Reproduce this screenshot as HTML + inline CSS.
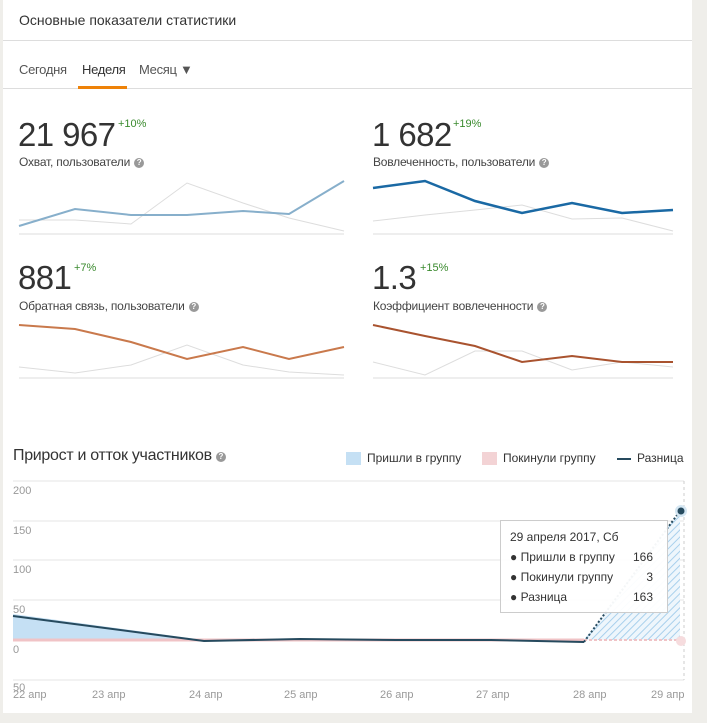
<!DOCTYPE html>
<html><head><meta charset="utf-8"><style>
body{margin:0;width:707px;height:723px;background:#efeeea;font-family:"Liberation Sans",sans-serif;position:relative;overflow:hidden;color:#333}
.card{position:absolute;left:3px;top:0;width:689px;height:713px;background:#fff}
.a{position:absolute;white-space:nowrap}
.q{display:inline-block;width:10px;height:10px;border-radius:50%;background:#999;color:#fff;font-size:8px;line-height:10px;text-align:center;font-weight:bold;vertical-align:1px;margin-left:4px}
.big{font-size:33px;color:#333;letter-spacing:-0.6px}
.pct{font-size:11px;color:#3a8a2e}
.lbl{font-size:12px;color:#444;letter-spacing:-0.2px}
</style></head><body>
<div class="card"></div>
<div class="a" style="left:19px;top:12px;font-size:14px;color:#333">Основные показатели статистики</div>
<div class="a" style="left:3px;top:40px;width:689px;height:1px;background:#ddd"></div>
<div class="a" style="left:19px;top:62px;font-size:13px;color:#555;letter-spacing:-0.3px">Сегодня</div>
<div class="a" style="left:82px;top:62px;font-size:13px;color:#333;letter-spacing:-0.3px">Неделя</div>
<div class="a" style="left:139px;top:62px;font-size:13px;color:#555;letter-spacing:-0.3px">Месяц ▼</div>
<div class="a" style="left:3px;top:88px;width:689px;height:1px;background:#ddd"></div>
<div class="a" style="left:78px;top:86px;width:49px;height:3px;background:#ee8208"></div>

<div class="a big" style="left:18px;top:116px">21 967</div><div class="a pct" style="left:118px;top:118px">+10%</div>
<div class="a lbl" style="left:19px;top:155px">Охват, пользователи<span class="q">?</span></div>
<div class="a big" style="left:372px;top:116px">1 682</div><div class="a pct" style="left:453px;top:118px">+19%</div>
<div class="a lbl" style="left:373px;top:155px">Вовлеченность, пользователи<span class="q">?</span></div>
<div class="a big" style="left:18px;top:259px">881</div><div class="a pct" style="left:74px;top:262px">+7%</div>
<div class="a lbl" style="left:19px;top:299px">Обратная связь, пользователи<span class="q">?</span></div>
<div class="a big" style="left:372px;top:259px">1.3</div><div class="a pct" style="left:420px;top:262px">+15%</div>
<div class="a lbl" style="left:373px;top:299px">Коэффициент вовлеченности<span class="q">?</span></div>

<div class="a" style="left:13px;top:447px;font-size:16px;color:#333;letter-spacing:-0.3px">Прирост и отток участников<span class="q">?</span></div>
<div class="a" style="left:346px;top:452px;width:15px;height:13px;background:#c5e0f4"></div>
<div class="a" style="left:367px;top:451px;font-size:12px">Пришли в группу</div>
<div class="a" style="left:482px;top:452px;width:15px;height:13px;background:#f3d3d5"></div>
<div class="a" style="left:503px;top:451px;font-size:12px">Покинули группу</div>
<div class="a" style="left:617px;top:458px;width:14px;height:2px;background:#264a5e"></div>
<div class="a" style="left:637px;top:451px;font-size:12px">Разница</div>

<svg class="a" style="left:0;top:0" width="707" height="723">
<defs><pattern id="h" width="5" height="5" patternUnits="userSpaceOnUse" patternTransform="rotate(45)"><rect width="5" height="5" fill="#eef6fc"/><line x1="0" y1="0" x2="0" y2="5" stroke="#a9d0ec" stroke-width="2"/></pattern></defs>
<g fill="none" stroke-width="1">
<line x1="19" y1="234" x2="344" y2="234" stroke="#ddd"/>
<line x1="373" y1="234" x2="673" y2="234" stroke="#ddd"/>
<line x1="19" y1="378" x2="344" y2="378" stroke="#ddd"/>
<line x1="373" y1="378" x2="673" y2="378" stroke="#ddd"/>
<polyline points="19,220 75,220 131,224 187,183 243,203 289,218 344,231" stroke="#ddd"/>
<polyline points="373,221 425,215 475,210 522,205 572,219 622,218 673,231" stroke="#ddd"/>
<polyline points="19,367 75,373 131,365 187,345 243,365 289,372 344,375" stroke="#ddd"/>
<polyline points="373,362 425,375 475,351 522,351 572,370 622,362 673,367" stroke="#ddd"/>
<polyline points="19,226 75,209 131,215 187,215 243,211 289,214 344,181" stroke="#87afcb" stroke-width="2"/>
<polyline points="373,188 425,181 475,201 522,213 572,203 622,213 673,210" stroke="#1a69a4" stroke-width="2.5"/>
<polyline points="19,325 75,329 131,342 187,359 243,347 289,359 344,347" stroke="#c9794c" stroke-width="2"/>
<polyline points="373,325 425,336 475,346 522,362 572,356 622,362 673,362" stroke="#a9532f" stroke-width="2"/>
<g stroke="#e6e6e6"><line x1="13" y1="481" x2="684" y2="481"/><line x1="13" y1="521" x2="684" y2="521"/><line x1="13" y1="560" x2="684" y2="560"/><line x1="13" y1="600" x2="684" y2="600"/><line x1="13" y1="680" x2="684" y2="680"/></g>
<line x1="684" y1="481" x2="684" y2="680" stroke="#ccc" stroke-dasharray="3,3"/>
</g>
<polygon points="13,614 204,640 13,640" fill="#c5e0f4"/>
<polygon points="584,640 680,511 680,640" fill="url(#h)"/>
<line x1="13" y1="640" x2="584" y2="640" stroke="#f0c3c6" stroke-width="3"/>
<line x1="584" y1="640" x2="680" y2="640" stroke="#f0c3c6" stroke-width="2" stroke-dasharray="3,2"/>
<polyline points="13,616 204,641 300,639 396,640 491,640 584,642" fill="none" stroke="#264a5e" stroke-width="2"/>
<line x1="584" y1="642" x2="680" y2="511" stroke="#264a5e" stroke-width="2" stroke-dasharray="2,2"/>
<circle cx="681" cy="511" r="6" fill="#d4e6f2"/><circle cx="681" cy="511" r="3.5" fill="#264a5e"/>
<circle cx="681" cy="641" r="5" fill="#f6dcde"/>
<g font-family="Liberation Sans" font-size="11" fill="#999">
<text x="13" y="494">200</text><text x="13" y="534">150</text><text x="13" y="573">100</text><text x="13" y="613">50</text><text x="13" y="653">0</text><text x="13" y="691">50</text>
<text x="13" y="698">22 апр</text><text x="92" y="698">23 апр</text><text x="189" y="698">24 апр</text><text x="284" y="698">25 апр</text><text x="380" y="698">26 апр</text><text x="476" y="698">27 апр</text><text x="573" y="698">28 апр</text><text x="651" y="698">29 апр</text>
</g>
<rect x="500.5" y="520.5" width="167" height="92" fill="#fff" fill-opacity="0.95" stroke="#ccc"/>
<g font-family="Liberation Sans" font-size="12" fill="#333">
<text x="510" y="541">29 апреля 2017, Сб</text>
<text x="510" y="561">● Пришли в группу</text><text x="653" y="561" text-anchor="end">166</text>
<text x="510" y="581">● Покинули группу</text><text x="653" y="581" text-anchor="end">3</text>
<text x="510" y="601">● Разница</text><text x="653" y="601" text-anchor="end">163</text>
</g>
</svg>
</body></html>
